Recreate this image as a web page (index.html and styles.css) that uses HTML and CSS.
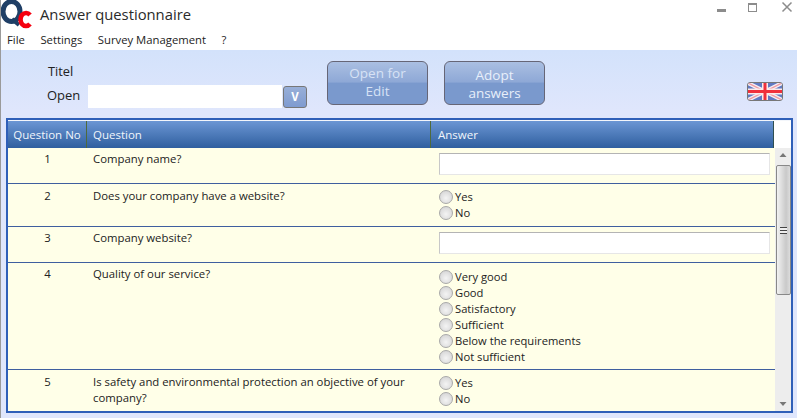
FILE: index.html
```html
<!DOCTYPE html>
<html lang="en">
<head>
<meta charset="utf-8">
<title>Answer questionnaire</title>
<link rel="stylesheet" href="styles.css">
</head>
<body>
<div class="window">
  <header class="titlebar">
    <svg class="logo" width="32" height="30" viewBox="0 0 32 30">
      <ellipse cx="10.500" cy="11.500" rx="8.500" ry="10" fill="none" stroke="#1f3f66" stroke-width="5"/>
      <path d="M11 19 L18 25" stroke="#1f3f66" stroke-width="4"/>
      <path d="M29 15 A5.500 6.500 0 1 0 29 24" fill="none" stroke="#f5000f" stroke-width="4.600"/>
    </svg>
    <span class="title">Answer questionnaire</span>
    <div class="winctl">
      <svg width="80" height="14" viewBox="0 0 80 14">
        <rect x="27" y="8" width="9" height="3" fill="#8c8c8c"/>
        <rect x="58.500" y="2.500" width="8" height="8" fill="none" stroke="#8c8c8c"/>
        <rect x="58" y="2" width="9" height="2" fill="#8c8c8c"/>
      </svg>
      <svg width="12" height="12" viewBox="0 0 12 12"><path d="M1.500 1.500 L10.500 10.500 M10.500 1.500 L1.500 10.500" stroke="#8c8c8c" stroke-width="1.500"/></svg>
    </div>
  </header>
  <nav class="menu">
    <span>File</span><span>Settings</span><span>Survey Management</span><span>?</span>
  </nav>
  <main class="content">
    <section class="toolbar">
      <div class="form">
        <div class="titel">Titel</div>
        <div class="open-row">
          <label class="open-label">Open</label>
          <div class="combo"></div>
          <button class="vbtn">V</button>
        </div>
      </div>
      <button class="bigbtn btn-first"><span>Open for</span><span>Edit</span></button>
      <button class="bigbtn btn-second"><span>Adopt</span><span>answers</span></button>
      <div class="flag">
        <svg width="34" height="17" viewBox="0 0 34 17">
          <rect width="34" height="17" fill="#6079c2"/>
          <path d="M0 0 L34 17 M34 0 L0 17" stroke="#f4f0f4" stroke-width="4"/>
          <path d="M0 0 L34 17 M34 0 L0 17" stroke="#f29aa2" stroke-width="1.400"/>
          <path d="M17 0 V17 M0 8.500 H34" stroke="#fbeaea" stroke-width="6"/>
          <path d="M17 0 V17 M0 8.500 H34" stroke="#f0303c" stroke-width="3"/>
        </svg>
      </div>
    </section>
    <section class="grid">
      <div class="grid-head">
        <div class="col-no hcell">Question No</div>
        <div class="col-q hcell">Question</div>
        <div class="col-a hcell">Answer</div>
      </div>
      <div class="grid-body">
        <div class="rows">
          <div class="row r1">
            <div class="col-no cell-text">1</div>
            <div class="col-q cell-text">Company name?</div>
            <div class="col-a"><div class="input"></div></div>
          </div>
          <div class="row r2">
            <div class="col-no cell-text">2</div>
            <div class="col-q cell-text">Does your company have a website?</div>
            <div class="col-a radios"><div class="radio">Yes</div><div class="radio">No</div></div>
          </div>
          <div class="row r3">
            <div class="col-no cell-text">3</div>
            <div class="col-q cell-text">Company website?</div>
            <div class="col-a"><div class="input"></div></div>
          </div>
          <div class="row r4">
            <div class="col-no cell-text">4</div>
            <div class="col-q cell-text">Quality of our service?</div>
            <div class="col-a radios">
              <div class="radio">Very good</div><div class="radio">Good</div><div class="radio">Satisfactory</div><div class="radio">Sufficient</div><div class="radio">Below the requirements</div><div class="radio">Not sufficient</div>
            </div>
          </div>
          <div class="row r5">
            <div class="col-no cell-text">5</div>
            <div class="col-q cell-text">Is safety and environmental protection an objective of your company?</div>
            <div class="col-a radios"><div class="radio">Yes</div><div class="radio">No</div></div>
          </div>
        </div>
        <div class="scrollbar">
          <svg class="arrow" width="8" height="6" viewBox="0 0 8 6"><path d="M4 1 L7.500 5 H0.500 Z" fill="#777"/></svg>
          <div class="thumb">
            <div class="grip"></div>
          </div>
          <svg class="arrow" width="8" height="6" viewBox="0 0 8 6"><path d="M0.500 1 H7.500 L4 5 Z" fill="#777"/></svg>
        </div>
      </div>
    </section>
  </main>
</div>
</body>
</html>
```
FILE: styles.css
```css
* { box-sizing: border-box; }
html, body { margin: 0; padding: 0; }
body { width: 797px; height: 418px; overflow: hidden; font-family: "Open Sans", "Noto Sans", sans-serif; font-size: 11.500px; color: #222; background: #fff; }
.window { width: 797px; height: 418px; display: flex; flex-direction: column; border-left: 1px solid #9a9a9a; }
.titlebar { height: 30px; display: flex; align-items: flex-start; background: #fff; position: relative; flex: none; }
.logo { flex: none; margin-top: 0; }
.title { font-size: 14.800px; line-height: 29px; margin-left: 7px; color: #2a2a2a; }
.winctl { margin-left: auto; display: flex; align-items: flex-start; gap: 11px; padding: 1px 4px 0 0; }
.menu { height: 20px; flex: none; display: flex; gap: 15.500px; padding-left: 6px; align-items: center; background: #fff; font-size: 11.300px; }
.menu span { line-height: 20px; }
.content { flex: 1; display: flex; flex-direction: column; background: linear-gradient(#d3e2fb, #dfe6fc 60px); padding: 0 4px 5px 5px; min-height: 0; }
.toolbar { height: 68px; flex: none; display: flex; align-items: flex-start; }
.form { width: 321px; padding: 13px 0 0 42px; flex: none; }
.titel { font-size: 12.800px; line-height: 16px; }
.open-row { display: flex; align-items: center; margin: 6px 0 0 -1px; }
.open-label { width: 41px; font-size: 13px; line-height: 16px; margin-top: -3px; }
.combo { width: 194px; height: 23px; background: #fff; }
.vbtn { width: 24px; height: 22px; margin-left: 1px; padding: 0; border: 1px solid #777; border-radius: 3px; background: linear-gradient(#98afd8, #7f9bd0); color: #fff; font: 700 11.500px "Open Sans", sans-serif; }
.bigbtn { width: 101px; height: 44px; margin-top: 11px; padding: 0 0 2px; border: 1px solid #667; border-radius: 6px; display: flex; flex-direction: column; align-items: center; justify-content: center; color: #d7e2f5; font-family: "Open Sans", sans-serif; font-size: 13.500px; line-height: 18px; background: linear-gradient(#aabfe2 0, #8ea8d6 48%, #7a99cd 50%, #7a99cd 100%); }
.btn-second { margin-left: 16px; padding: 1px 0 0; color: #e8effa; }
.flag { margin: 32px 10px 0 auto; width: 36px; height: 19px; border: 1px solid #777; border-radius: 3px; overflow: hidden; display: flex; }
.flag svg { display: block; filter: blur(0.35px); }
.grid { flex: 1; min-height: 0; display: flex; flex-direction: column; border: 2px solid #2f5fb8; background: #fff; width: 787px; margin-left: 0; }
.grid-head { height: 28px; display: flex; flex: none; padding-right: 17px; border-top: 1px solid #f3f6fb; }
.hcell { background: linear-gradient(#6b96d4, #2f5f9f); color: #f0f5fb; font-size: 11.500px; line-height: 27px; border-right: 1px solid #4f6a3c; }
.col-no { width: 79px; flex: none; text-align: center; }
.col-q { width: 344px; flex: none; padding-left: 6px; }
.col-a { flex: 1; padding-left: 8px; }
.hcell.col-a { padding-left: 7px; border-right: 1px solid #2f4f4f; }
.grid-body { flex: 1; min-height: 0; display: flex; }
.rows { flex: 1; min-width: 0; background: #ffffe8; }
.row { display: flex; border-bottom: 1px solid #3f5f9f; padding-top: 4px; line-height: 16px; font-size: 11.200px; }
.cell-text { font-size: 11.350px; margin-top: -1px; }
.r1 { height: 36px; }
.r2 { height: 43px; padding-top: 5px; }
.r3 { height: 36px; }
.r4 { height: 107px; }
.r5 { height: 41px; padding-top: 5px; border-bottom: 0; }
.input { width: 331px; height: 22px; margin-top: 1px; background: #fff; border: 1px solid #e6e6e6; border-top-color: #b4b4b4; border-left-color: #c8c8c8; }
.r5 .col-q { white-space: normal; padding-right: 10px; }
.radio { display: flex; align-items: center; height: 16px; }
.radio::before { content: ""; width: 12px; height: 12px; margin-right: 2px; border-radius: 50%; border: 1px solid #a8a8a8; background: radial-gradient(circle at 50% 60%, #f4f4f4, #cfcfcf); flex: none; }
.radios { padding-top: 2px; }
.r2 .radios, .r5 .radios { padding-top: 0; }
.scrollbar { width: 16px; flex: none; background: #ededed; display: flex; flex-direction: column; align-items: center; }
.scrollbar .arrow { flex: none; margin: 4px 0; }
.thumb { width: 15px; height: 130px; margin: 3px 0 auto; border: 1px solid #888; border-radius: 2px; background: linear-gradient(90deg, #f2f2f2, #c9c9c9 70%, #dcdcdc); display: flex; align-items: center; justify-content: center; }
.grip { width: 7px; height: 7px; background: repeating-linear-gradient(#444 0 1px, #eee 1px 3px); }
```
